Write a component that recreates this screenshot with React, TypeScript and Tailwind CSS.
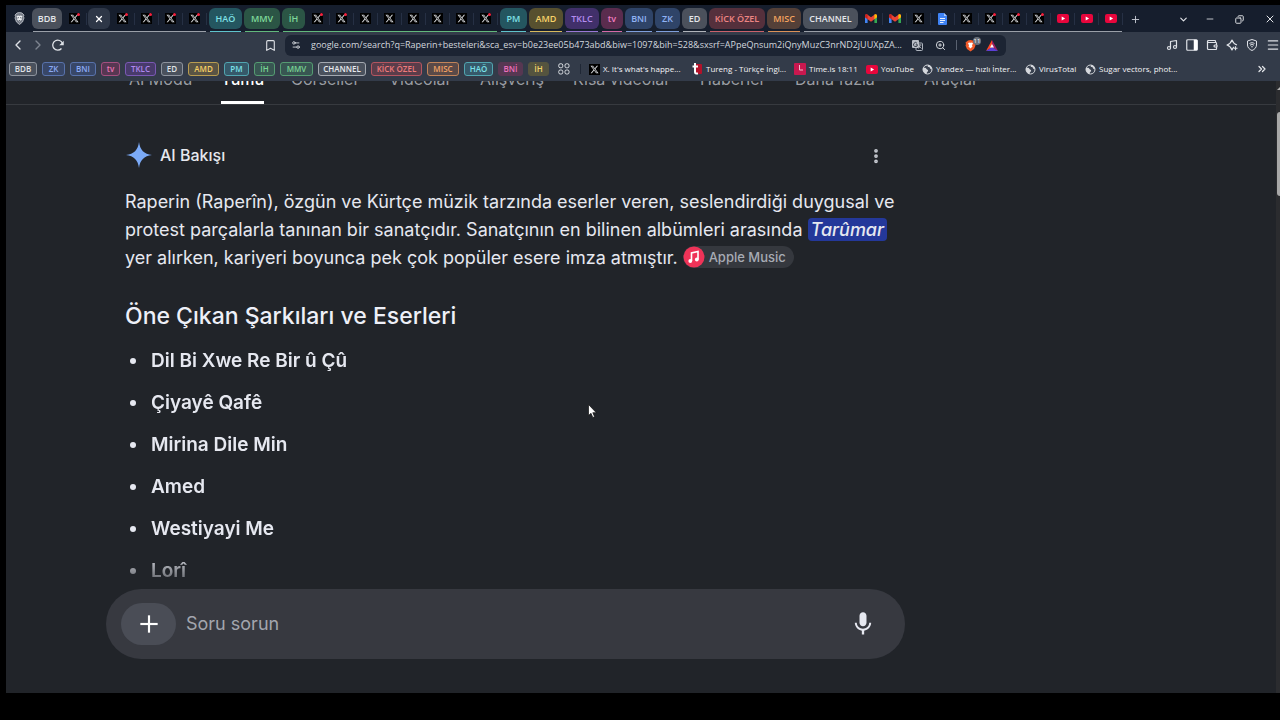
import { type ReactNode } from "react";
import {
  Bookmark,
  ChevronDown,
  ChevronLeft,
  ChevronRight,
  ChevronsRight,
  Copy,
  Menu,
  Minus,
  MoreVertical,
  Music,
  Plus,
  Settings2,
  Wallet,
  X as Close,
  ZoomIn,
} from "lucide-react";
import { FaXTwitter } from "react-icons/fa6";
import { MdMic } from "react-icons/md";

type TabKind = "x" | "xr" | "active" | "gmail" | "docs" | "yt";

type TabGroup = {
  label: string;
  chip: string;
  line: string;
  tabs: TabKind[];
};

const groups: TabGroup[] = [
  { label: "BDB", chip: "w-[30px] bg-[#4b515c] text-[#e4e6ea]", line: "bg-[#9a9fa8]", tabs: ["xr", "active", "xr", "xr", "xr", "xr"] },
  { label: "HAÖ", chip: "w-[33px] bg-[#245660] text-[#7fe0e6]", line: "bg-[#5fc3cc]", tabs: [] },
  { label: "MMV", chip: "w-[36px] bg-[#2b5545] text-[#7fd99a]", line: "bg-[#62b87c]", tabs: [] },
  { label: "İH", chip: "w-[23px] bg-[#2b5545] text-[#7fd99a]", line: "bg-[#62b87c]", tabs: ["xr", "xr", "x", "x", "x", "x", "x", "xr"] },
  { label: "PM", chip: "w-[27px] bg-[#245660] text-[#7fe0e6]", line: "bg-[#5fc3cc]", tabs: [] },
  { label: "AMD", chip: "w-[34px] bg-[#57502f] text-[#f8d36a]", line: "bg-[#d8b95c]", tabs: [] },
  { label: "TKLC", chip: "w-[34px] bg-[#41306a] text-[#b48cf0]", line: "bg-[#9a78d6]", tabs: [] },
  { label: "tv", chip: "w-[22px] bg-[#5a2c4e] text-[#f07cc0]", line: "bg-[#d56aa8]", tabs: [] },
  { label: "BNI", chip: "w-[28px] bg-[#2f4468] text-[#8fb2f5]", line: "bg-[#7f9fdc]", tabs: [] },
  { label: "ZK", chip: "w-[25px] bg-[#2f4468] text-[#8fb2f5]", line: "bg-[#7f9fdc]", tabs: [] },
  { label: "ED", chip: "w-[25px] bg-[#4b515c] text-[#e4e6ea]", line: "bg-[#b0b4bb]", tabs: [] },
  { label: "KİCK ÖZEL", chip: "w-[56px] bg-[#55303c] text-[#ee8583]", line: "bg-[#c9626b]", tabs: [] },
  { label: "MISC", chip: "w-[34px] bg-[#544038] text-[#f5a45f]", line: "bg-[#dc9258]", tabs: [] },
  {
    label: "CHANNEL",
    chip: "w-[55px] bg-[#4b515c] text-[#e4e6ea]",
    line: "bg-[#9a9fa8]",
    tabs: ["gmail", "gmail", "x", "docs", "x", "xr", "xr", "xr", "yt", "yt", "yt"],
  },
];

const folders = [
  { label: "BDB", style: "w-[28px] border-[#8d939d] bg-[#4a515d] text-[#dfe2e7]" },
  { label: "ZK", style: "w-[23px] border-[#5872ab] bg-[#384768] text-[#8ba9f3]" },
  { label: "BNI", style: "w-[26px] border-[#5872ab] bg-[#384768] text-[#8ba9f3]" },
  { label: "tv", style: "w-[19px] border-[#a44f80] bg-[#573752] text-[#ec76b6]" },
  { label: "TKLC", style: "w-[31px] border-[#7a58b4] bg-[#483b6b] text-[#b088ee]" },
  { label: "ED", style: "w-[22px] border-[#8d939d] bg-[#4a515d] text-[#dfe2e7]" },
  { label: "AMD", style: "w-[31px] border-[#b89c50] bg-[#5a5444] text-[#f6cf64]" },
  { label: "PM", style: "w-[25px] border-[#51a5b0] bg-[#36596a] text-[#7be0e8]" },
  { label: "İH", style: "w-[21px] border-[#559c72] bg-[#385652] text-[#78d394]" },
  { label: "MMV", style: "w-[33px] border-[#559c72] bg-[#385652] text-[#78d394]" },
  { label: "CHANNEL", style: "w-[48px] border-[#a3a8b0] bg-[#4a515d] text-[#e6e8ec]" },
  { label: "KİCK ÖZEL", style: "w-[51px] border-[#b45560] bg-[#5b3d4a] text-[#ee7b7c]" },
  { label: "MISC", style: "w-[32px] border-[#c08359] bg-[#5a4a48] text-[#f3a263]" },
  { label: "HAÖ", style: "w-[29px] border-[#51a5b0] bg-[#36596a] text-[#7be0e8]" },
  { label: "BNİ", style: "w-[25px] border-[#573752] bg-[#573752] text-[#ec6fbc]" },
  { label: "İH", style: "w-[21px] border-[#55543f] bg-[#55543f] text-[#f0d268]" },
];

function XLogo({ dot = false }: { dot?: boolean }) {
  return (
    <span className="relative flex size-[11px] shrink-0 items-center justify-center bg-black text-[#d8dadd]">
      <FaXTwitter size={9} />
      {dot && <span className="absolute top-0 right-0 size-[3px] rounded-full bg-[#f4213f]" />}
    </span>
  );
}

function YouTubeLogo() {
  return (
    <svg width="12" height="9" viewBox="0 0 12 9" className="shrink-0">
      <rect width="12" height="9" rx="2" fill="#e8063c" />
      <path d="M4.7 2.5v4l3.4-2z" fill="#fff" />
    </svg>
  );
}

function GmailLogo() {
  return (
    <svg width="12" height="10" viewBox="0 0 12 10">
      <path d="M0 1.5V9h2.6V3.6z" fill="#4285f4" />
      <path d="M12 1.5V9H9.4V3.6z" fill="#34a853" />
      <path d="M0 1.2V3.3l6 4.4 6-4.4V1.2C11.6 0 10.2 0 9.4.7L6 3.3 2.6.7C1.8 0 .4 0 0 1.2z" fill="#ea4335" />
      <path d="M9.4.7v4.5L12 3.3V1.2C11.6 0 10.2 0 9.4.7z" fill="#fbbc04" />
      <path d="M0 1.2v2.1l2.6 1.9V.7C1.8 0 .4 0 0 1.2z" fill="#c5221f" />
    </svg>
  );
}

function DocsLogo() {
  return (
    <svg width="9" height="12" viewBox="0 0 9 12">
      <path d="M1 0h5l3 3v8a1 1 0 0 1-1 1H1a1 1 0 0 1-1-1V1a1 1 0 0 1 1-1z" fill="#3f83f5" />
      <path d="M6 0l3 3H6z" fill="#a9c8fb" />
      <path d="M2 5.5h5M2 7.5h5M2 9.5h3.5" stroke="#fff" strokeWidth="0.9" />
    </svg>
  );
}

function BraveShield() {
  return (
    <svg width="11" height="13" viewBox="0 0 22 26" fill="none">
      <path d="M11 1l5 1 4 4-1 3 1 3-3 8-6 5-6-5-3-8 1-3-1-3 4-4z" fill="#767c87" stroke="#c5c9d0" strokeWidth="1.6" />
      <path d="M5 8l4-1 2 1 2-1 4 1-2 5 1 2-5 4-5-4 1-2z" fill="#eceef1" />
      <path d="M7 10l3 1-1 2zM15 10l-3 1 1 2zM9 16h4l-2 2z" fill="#3a404c" />
    </svg>
  );
}

function Tab({ kind }: { kind: TabKind }) {
  if (kind === "active") {
    return (
      <button aria-label="Sekmeyi kapat" className="mx-px flex h-[21px] w-[22px] items-center justify-center rounded-md bg-[#2e3747] text-white">
        <Close size={10} strokeWidth={3} />
      </button>
    );
  }
  return (
    <button aria-label="Sekme" className="flex h-3 w-6 items-center justify-center border-r border-[#263044]">
      {kind === "x" && <XLogo />}
      {kind === "xr" && <XLogo dot />}
      {kind === "gmail" && <GmailLogo />}
      {kind === "docs" && <DocsLogo />}
      {kind === "yt" && <YouTubeLogo />}
    </button>
  );
}

function TabStrip() {
  return (
    <div className="flex h-[27px] items-end bg-[#161e2d]">
      <div className="flex h-[27px] w-[26px] shrink-0 items-center justify-center">
        <BraveShield />
      </div>
      <div className="flex shrink-0 gap-0.5">
        {groups.map((g) => (
          <div key={g.label}>
            <div className="flex h-[23px] items-start gap-px">
              <button className={`h-[21px] rounded-md text-center text-[9px] font-semibold whitespace-nowrap ${g.chip}`}>
                {g.label}
              </button>
              {g.tabs.length > 0 && (
                <div className="flex h-[21px] items-center">
                  {g.tabs.map((t, i) => (
                    <Tab key={i} kind={t} />
                  ))}
                </div>
              )}
            </div>
            <div className={`mx-px h-px ${g.line}`} />
          </div>
        ))}
      </div>
      <button aria-label="Yeni sekme" className="flex h-[26px] w-6 items-center justify-center text-[#c9cdd4]">
        <Plus size={11} />
      </button>
      <div className="flex h-[26px] flex-1 items-center justify-end gap-5 pr-1 text-[#e3e5e9]">
        <button aria-label="Sekme ara" className="-mr-1"><ChevronDown size={11} strokeWidth={2.5} /></button>
        <button aria-label="Küçült"><Minus size={10} /></button>
        <button aria-label="Geri yükle"><Copy size={9} className="-scale-x-100" strokeWidth={2.5} /></button>
        <button aria-label="Kapat"><Close size={12} /></button>
      </div>
    </div>
  );
}

function BraveLion() {
  return (
    <span className="relative flex shrink-0">
      <svg width="14" height="13" viewBox="0 0 28 26">
        <path d="M11 2l5 1 5 4-1 3 1 3-3 7-7 5-7-5-3-7 1-3-1-3 5-4z" fill="#f25a29" />
        <path d="M6 8l4-1 1 1 1-1 4 1-2 5 1 2-4 4-4-4 1-2z" fill="#fff" />
      </svg>
      <span className="absolute -top-0.5 -right-0.5 flex size-2 items-center justify-center rounded-full bg-[#6a707b] text-[6px] leading-none text-white">
        11
      </span>
    </span>
  );
}

function Toolbar() {
  return (
    <div className="flex h-[25px] items-center bg-[#333b49] pt-px text-[#dfe2e7]">
      <div className="flex w-[279px] shrink-0 items-center pr-2 pl-1">
        <div className="flex flex-1 items-center gap-1">
          <button aria-label="Geri"><ChevronLeft size={16} /></button>
          <button aria-label="İleri" className="text-[#7d8490]"><ChevronRight size={16} /></button>
          <button aria-label="Yenile" className="ml-0.5">
            <svg width="12" height="12" viewBox="0 0 24 24" fill="none" stroke="currentColor" strokeWidth="2.6">
              <path d="M19 19a10 10 0 1 1 2-10" />
              <path d="M23.5 3.5v9h-9z" fill="currentColor" stroke="none" />
            </svg>
          </button>
        </div>
        <button aria-label="Yer imi ekle"><Bookmark size={13} /></button>
      </div>
      <div className="flex h-[21px] min-w-0 flex-1 items-center rounded-md bg-[#1c2433] pl-1.5">
        <Settings2 size={10} className="mr-2.5 shrink-0" />
        <input
          aria-label="Adres"
          readOnly
          className="mr-2 min-w-0 flex-1 bg-transparent text-[9px] text-[#d3d7de] outline-none"
          value="google.com/search?q=Raperin+besteleri&sca_esv=b0e23ee05b473abd&biw=1097&bih=528&sxsrf=APpeQnsum2iQnyMuzC3nrND2jUUXpZA..."
        />
        <svg className="mr-3 shrink-0" width="11" height="11" viewBox="0 0 22 22">
          <rect x="8" y="6" width="13" height="15" rx="2" fill="none" stroke="#aeb4be" strokeWidth="2" />
          <rect width="14" height="16" rx="2" fill="#b9bec7" />
          <path d="M10 6.5a4 4 0 1 0 1 3H7.5" fill="none" stroke="#2a3241" strokeWidth="1.8" />
          <path d="M13 10h6M16 9c0 4-1 6-3 8M14 12l5 5" stroke="#d5d8dd" strokeWidth="1.4" fill="none" />
        </svg>
        <ZoomIn size={11} className="mr-2.5 shrink-0" />
        <span className="mr-2 h-2.5 w-px bg-[#596170]" />
        <BraveLion />
        <svg className="mr-2 ml-[7px] shrink-0" width="12" height="11" viewBox="0 0 24 22">
          <path d="M12 0L0 22l12-7z" fill="#ff4724" />
          <path d="M12 0l12 22-12-7z" fill="#9e1f63" />
          <path d="M0 22h24l-12-8z" fill="#5b3fd6" />
          <path d="M12 8l-4 7h8z" fill="#fff" />
        </svg>
      </div>
      <div className="flex w-[274px] shrink-0 items-center justify-end gap-2">
        <button aria-label="Müzik"><Music size={12} strokeWidth={2.4} /></button>
        <button aria-label="Kenar çubuğu">
          <svg width="12" height="12" viewBox="0 0 24 24">
            <rect x="1.5" y="1.5" width="21" height="21" rx="2" fill="none" stroke="currentColor" strokeWidth="2.4" />
            <path d="M15.5 1.5H21a2 2 0 0 1 2 2v17a2 2 0 0 1-2 2h-5.5z" fill="#fff" />
          </svg>
        </button>
        <button aria-label="Cüzdan"><Wallet size={12} strokeWidth={2.4} /></button>
        <button aria-label="Leo">
          <svg width="12" height="12" viewBox="0 0 24 24" fill="none" stroke="currentColor" strokeWidth="2.4" strokeLinejoin="round">
            <path d="M16 16c-2 1-3 3-4 6-2-6-4-8-10-10 6-2 8-4 10-10 2 6 4 8 10 10" />
            <path d="M19 14.5v8M15 18.5h8" />
          </svg>
        </button>
        <button aria-label="VPN">
          <svg width="12" height="12" viewBox="0 0 24 24" fill="none" stroke="currentColor" strokeWidth="2">
            <path d="M12 1l9 3v8c0 5-4 9-9 11-5-2-9-6-9-11V4z" />
            <path d="M7 9c3-2 7-2 10 0M8 12.5c3-2 5-2 8 0M10 16c1.5-1 2.5-1 4 0" />
          </svg>
        </button>
        <button aria-label="Menü"><Menu size={14} /></button>
      </div>
    </div>
  );
}

function SiteLink({ icon, width, children }: { icon: ReactNode; width: string; children: string }) {
  return (
    <a href="#" className={`flex shrink-0 items-center gap-[3px] text-[8px] font-medium whitespace-nowrap text-[#f3f4f6] ${width}`}>
      {icon}
      {children}
    </a>
  );
}

const globe = (
  <svg width="11" height="11" viewBox="0 0 22 22" className="shrink-0">
    <circle cx="11" cy="11" r="9" fill="#3a4250" stroke="#d5d8dd" strokeWidth="2" />
    <path d="M2 8c4-1 6 0 7 2s4 1 3 4-3 2-3 6C4 19 1 13 2 8zM12 2c-2 3 0 4 2 4s1 4 6 5c0-5-3-9-8-9z" fill="#d5d8dd" />
  </svg>
);

function BookmarksBar() {
  return (
    <div className="flex h-6 items-center bg-[#333b49] pr-3 pl-[3px]">
      <div className="flex shrink-0 gap-[5px]">
        {folders.map((f, i) => (
          <button key={i} className={`h-[14px] rounded-[3px] border text-center text-[8px] leading-none font-semibold whitespace-nowrap ${f.style}`}>
            {f.label}
          </button>
        ))}
      </div>
      <svg className="mr-2.5 ml-[9px] shrink-0" width="12" height="12" viewBox="0 0 24 24" fill="none" stroke="#dfe2e7" strokeWidth="2">
        <rect x="1.5" y="1.5" width="8" height="8" rx="3" />
        <rect x="14" y="1.5" width="8" height="8" rx="3" />
        <rect x="1.5" y="14" width="8" height="8" rx="3" />
        <rect x="14" y="14" width="8" height="8" rx="3" />
      </svg>
      <span className="mr-2 h-2.5 w-px bg-[#1f2735]" />
      <SiteLink width="w-[102px]" icon={<XLogo />}>X. It's what's happe...</SiteLink>
      <SiteLink
        width="w-[103px]"
        icon={
          <svg width="12" height="12" viewBox="0 0 12 12" className="shrink-0">
            <rect x="4" y="1" width="7" height="10" rx="1" fill="#b3122a" />
            <path d="M4 0v9q0 2 3 1.5M1.5 3.5H7" fill="none" stroke="#fff" strokeWidth="2" />
          </svg>
        }
      >
        Tureng - Türkçe İngi...
      </SiteLink>
      <SiteLink
        width="w-[72px]"
        icon={
          <svg width="12" height="12" viewBox="0 0 12 12" className="shrink-0">
            <rect width="12" height="12" rx="1" fill="#c9184f" />
            <path d="M5.5 2v5H9" fill="none" stroke="#f5b8cb" />
          </svg>
        }
      >
        Time.is 18:11
      </SiteLink>
      <SiteLink width="w-[56px]" icon={<YouTubeLogo />}>YouTube</SiteLink>
      <SiteLink width="w-[103px]" icon={globe}>Yandex — hızlı İnter...</SiteLink>
      <SiteLink width="w-[60px]" icon={globe}>VirusTotal</SiteLink>
      <SiteLink width="w-[100px]" icon={globe}>Sugar vectors, phot...</SiteLink>
      <button aria-label="Diğer yer imleri" className="ml-auto text-[#e3e5e9]">
        <ChevronsRight size={12} strokeWidth={2.5} />
      </button>
    </div>
  );
}

const navItems = [
  { label: "AI Modu", width: "w-[92px]" },
  { label: "Tümü", width: "w-[70px]", active: true },
  { label: "Görseller", width: "w-[98px]" },
  { label: "Videolar", width: "w-[91px]" },
  { label: "Alışveriş", width: "w-[93px]" },
  { label: "Kısa videolar", width: "w-[127px]" },
  { label: "Haberler", width: "w-[95px]" },
  { label: "Daha fazla", width: "w-[129px]" },
  { label: "Araçlar", width: "w-[80px]" },
];

// The row is scrolled half out of view, so only the lower part of the labels shows
function ResultNav() {
  return (
    <nav className="flex h-6 items-end overflow-hidden border-b border-[#373a3f] pl-[123px] text-base leading-5">
      {navItems.map((n) => (
        <div key={n.label} className={`shrink-0 ${n.width}`}>
          <a
            href="#"
            className={
              n.active
                ? "inline-block border-b-[3px] border-white pb-3 font-medium text-white"
                : "inline-block border-b-[3px] border-transparent pb-3 text-[#9a9da3]"
            }
          >
            {n.label}
          </a>
        </div>
      ))}
    </nav>
  );
}

const songs = ["Dil Bi Xwe Re Bir û Çû", "Çiyayê Qafê", "Mirina Dile Min", "Amed", "Westiyayi Me", "Lorî"];

function AiOverview() {
  return (
    <section className="w-[760px]">
      <div className="flex items-center justify-between pt-[37px]">
        <h1 className="flex items-center gap-2 text-base font-medium text-[#e6e8ee]">
          <svg width="27" height="26" viewBox="-1 0 27 26">
            <path d="M13 0c1 8 5 12 13 13-8 1-12 5-13 13C12 18 8 14 0 13 8 12 12 8 13 0z" fill="#7baaf7" />
          </svg>
          AI Bakışı
        </h1>
        <button aria-label="Diğer seçenekler" className="pt-0.5 text-[#c9ccd3]">
          <MoreVertical size={18} strokeWidth={3} />
        </button>
      </div>
      <p className="mt-5 text-lg leading-7 whitespace-nowrap text-[#e6e8f0]">
        Raperin (Raperîn), özgün ve Kürtçe müzik tarzında eserler veren, seslendirdiği duygusal ve
        <br />
        protest parçalarla tanınan bir sanatçıdır. Sanatçının en bilinen albümleri arasında{" "}
        <mark className="rounded bg-[#24389a] px-[3px] py-px font-medium text-[#e6e8f0] italic">Tarûmar</mark>
        <br />
        yer alırken, kariyeri boyunca pek çok popüler esere imza atmıştır.{" "}
        <a href="#" className="inline-flex h-[22px] items-center gap-1 rounded-full bg-[#35383e] pr-2 align-text-bottom text-[13px] leading-none font-medium text-[#a7abb4]">
          <svg width="22" height="22" viewBox="0 0 22 22">
            <circle cx="11" cy="11" r="10.5" fill="#ef3358" />
            <path d="M8.5 15V7l6.500-1.500v8" fill="none" stroke="#fff" strokeWidth="1.6" />
            <circle cx="7.3" cy="15" r="1.9" fill="#fff" />
            <circle cx="13.8" cy="13.5" r="1.9" fill="#fff" />
          </svg>
          Apple Music
        </a>
      </p>
      <h2 className="mt-7 text-[23px] leading-8 font-medium text-[#eef0f8]">Öne Çıkan Şarkıları ve Eserleri</h2>
      <ul className="mt-[15px] flex flex-col gap-3.5 [mask-image:linear-gradient(to_bottom,black_86%,rgb(0_0_0_/_0.4)_97%)] text-[19px] leading-7 font-semibold text-[#e6e8f0]">
        {songs.map((s) => (
          <li key={s} className="flex items-center gap-[15px] pl-[5px]">
            <span className="size-[6px] rounded-full bg-[#e6e8f0]" />
            {s}
          </li>
        ))}
      </ul>
    </section>
  );
}

export default function App() {
  return (
    <div className="relative flex min-h-screen flex-col overflow-hidden bg-black pt-[5px] pb-[27px] pl-[6px] font-['Open_Sans',sans-serif]">
      <TabStrip />
      <Toolbar />
      <BookmarksBar />
      <div className="flex flex-1 bg-[#212429] font-['Inter',sans-serif]">
        <main className="min-w-0 flex-1">
          <ResultNav />
          <div className="pl-[119px]">
            <AiOverview />
          </div>
          <form className="mt-1 ml-[100px] flex h-[70px] w-[799px] items-center rounded-full bg-[#373940] pr-7 pl-[15px]">
            <button type="button" aria-label="Ekle" className="flex h-[42px] w-[55px] items-center justify-center rounded-full bg-[#4a4d56] text-white">
              <Plus size={26} strokeWidth={2} strokeLinecap="square" />
            </button>
            <input
              aria-label="Soru sorun"
              placeholder="Soru sorun"
              className="ml-2.5 min-w-0 flex-1 bg-transparent text-lg text-[#e6e8f0] outline-none placeholder:text-[#a3a6ae]"
            />
            <button type="button" aria-label="Sesli arama" className="text-[#e6e8f0]">
              <MdMic size={28} />
            </button>
          </form>
        </main>
        <div className="flex w-1 flex-col items-end bg-[#2b2c2f] pt-1.5">
          <svg width="3" height="3" viewBox="0 0 3 3" className="shrink-0">
            <path d="M0 3l3-3v3z" fill="#b5b5b5" />
          </svg>
          <div className="mt-[22px] h-[84px] w-[3px] rounded-l-sm bg-[#a8a8a8]" />
        </div>
      </div>
      <svg className="pointer-events-none absolute top-[404px] left-[588px]" width="9" height="15" viewBox="0 0 9 15">
        <path d="M.5.5v11l2.5-2.2 1.8 4.2 1.8-.8-1.8-4h3.5z" fill="#fff" stroke="#111" strokeWidth="0.7" />
      </svg>
    </div>
  );
}
